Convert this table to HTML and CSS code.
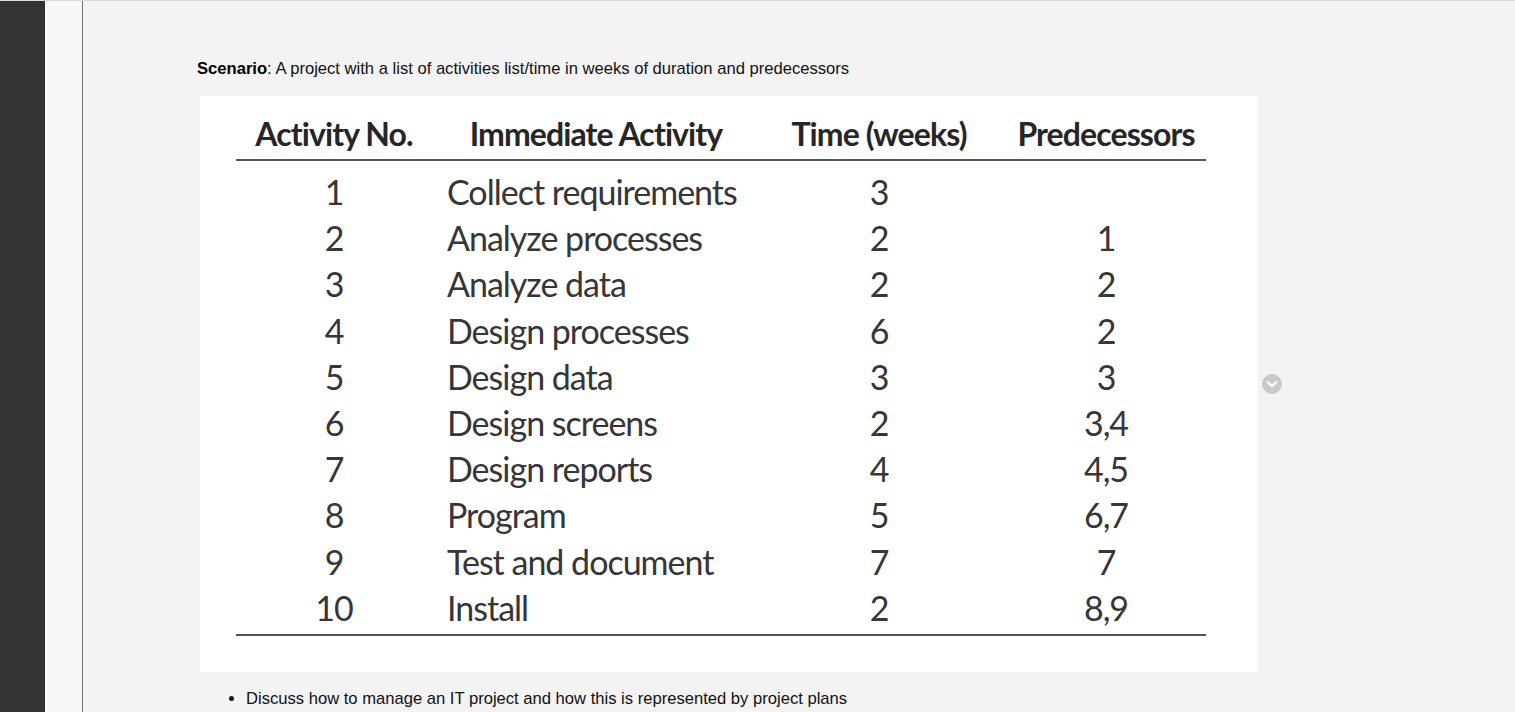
FILE: index.html
```html
<!DOCTYPE html>
<html lang="en">
<head>
<meta charset="utf-8">
<title>Scenario</title>
<link rel="stylesheet" href="styles.css">
</head>
<body>
<div class="app">
  <div class="rail"></div>
  <div class="side"></div>
  <main class="main">
    <p class="scenario"><b>Scenario</b>: A project with a list of activities list/time in weeks of duration and predecessors</p>
    <div class="figure-row">
      <div class="figure">
        <div class="tbl">
          <div class="thead">
            <div class="c1">Activity No.</div>
            <div class="c2 hc">Immediate Activity</div>
            <div class="c3">Time (weeks)</div>
            <div class="c4">Predecessors</div>
          </div>
          <div class="tbody">
            <div class="c1">1</div><div class="c2">Collect requirements</div><div class="c3">3</div><div class="c4"></div>
            <div class="c1">2</div><div class="c2">Analyze processes</div><div class="c3">2</div><div class="c4">1</div>
            <div class="c1">3</div><div class="c2">Analyze data</div><div class="c3">2</div><div class="c4">2</div>
            <div class="c1">4</div><div class="c2">Design processes</div><div class="c3">6</div><div class="c4">2</div>
            <div class="c1">5</div><div class="c2">Design data</div><div class="c3">3</div><div class="c4">3</div>
            <div class="c1">6</div><div class="c2">Design screens</div><div class="c3">2</div><div class="c4">3,4</div>
            <div class="c1">7</div><div class="c2">Design reports</div><div class="c3">4</div><div class="c4">4,5</div>
            <div class="c1">8</div><div class="c2">Program</div><div class="c3">5</div><div class="c4">6,7</div>
            <div class="c1">9</div><div class="c2">Test and document</div><div class="c3">7</div><div class="c4">7</div>
            <div class="c1">10</div><div class="c2">Install</div><div class="c3">2</div><div class="c4">8,9</div>
          </div>
        </div>
      </div>
      <button class="expand" aria-label="Expand">
        <svg width="20" height="20" viewBox="0 0 20 20"><circle cx="10" cy="10" r="10" fill="#c9c9c9"/><path d="M5.8 8.2 L10 12.2 L14.2 8.2" fill="none" stroke="#fff" stroke-width="2.4" stroke-linecap="round" stroke-linejoin="round"/></svg>
      </button>
    </div>
    <ul class="tasks">
      <li>Discuss how to manage an IT project and how this is represented by project plans</li>
    </ul>
  </main>
</div>
</body>
</html>
```

FILE: styles.css
```css
html, body {
  margin: 0;
  padding: 0;
  height: 100%;
  overflow: hidden;
}
body {
  background: #f3f3f3;
  font-family: "Liberation Sans", Arial, sans-serif;
  color: #000;
}
.app {
  display: flex;
  height: 712px;
  border-top: 1px solid #d9d9d9;
  box-sizing: border-box;
}
.rail {
  width: 45px;
  background: #333333;
  flex: none;
}
.side {
  width: 37px;
  background: #f8f8f8;
  border-right: 1px solid #707070;
  flex: none;
}
.main {
  flex: 1;
  padding-left: 114px;
}
.scenario {
  margin: 58px 0 0 0;
  font-size: 16.6px;
  line-height: 19px;
  color: #111;
}
.scenario b { color: #000; }
.figure-row {
  position: relative;
  margin: 18px 0 0 3px;
  width: 1058px;
}
.figure {
  background: #fff;
  width: 1058px;
  height: 576px;
  box-sizing: border-box;
  padding: 18px 52px 0 36px;
}
.tbl {
  width: 970px;
  font-family: Lato, "Open Sans", sans-serif;
  color: #363636;
}
.thead, .tbody {
  display: grid;
  grid-template-columns: 196px 320px 254px 200px;
}
.thead {
  font-weight: 700;
  font-size: 32px;
  line-height: 40px;
  letter-spacing: -0.9px;
  color: #262626;
  padding-bottom: 5px;
  border-bottom: 2px solid #555;
  text-align: center;
}
.thead .hc { padding-left: 8px; }
.tbody {
  font-size: 34px;
  line-height: 46.2px;
  letter-spacing: -1px;
  padding: 8px 0 3px;
  border-bottom: 2px solid #555;
  text-align: center;
}
.tbody .c2 {
  text-align: left;
  padding-left: 15px;
}
.expand {
  position: absolute;
  left: 1062px;
  top: 278px;
  width: 20px;
  height: 20px;
  padding: 0;
  border: 0;
  background: none;
}
.expand svg { display: block; }
.tasks {
  margin: 17px 0 0 0;
  padding-left: 49px;
  font-size: 16.6px;
  line-height: 19px;
  color: #111;
}
```
